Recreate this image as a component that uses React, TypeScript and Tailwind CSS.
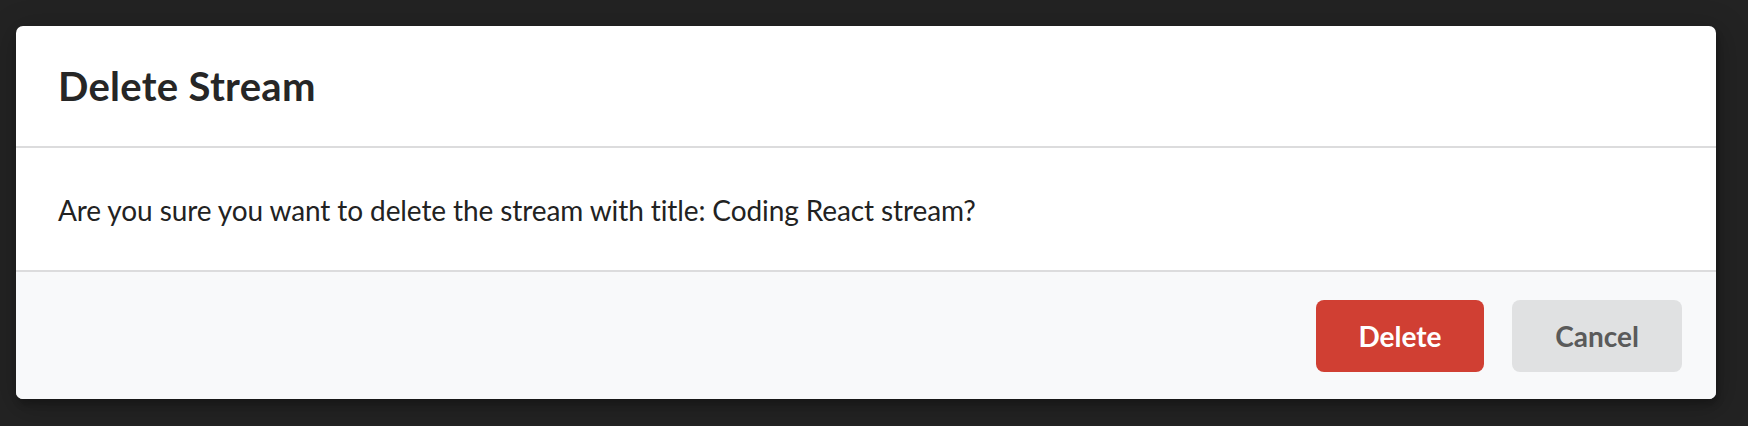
export default function App() {
  return (
    <div
      className="h-[426px] w-[1748px] overflow-hidden bg-[#232323] pl-[16px] pt-[26px]"
      style={{ fontFamily: 'Lato, "Open Sans", sans-serif' }}
    >
      <div className="w-[1700px] overflow-hidden rounded-[7px] bg-white shadow-[2px_6px_6px_0_rgba(0,0,0,0.2),2px_6px_30px_4px_rgba(0,0,0,0.2)]">
        <div className="border-b-2 border-[#dcdcdd] px-[42px] pb-[34px] pt-[35px]">
          <h1 className="text-[40px] font-bold leading-[51px] tracking-[0.3px] text-[#262626]">Delete Stream</h1>
        </div>
        <div className="border-b-2 border-[#dcdcdd] px-[42px] pb-[40px] pt-[42px]">
          <p className="text-[28px] leading-[40px] tracking-[-0.1px] text-[#222222]">
            Are you sure you want to delete the stream with title: Coding React stream?
          </p>
        </div>
        <div className="flex justify-end gap-[28px] bg-[#f8f9fa] pb-[27px] pl-[28px] pr-[34px] pt-[28px]">
          <button className="h-[72px] w-[168px] rounded-[8px] bg-[#d03f33] text-[28px] font-bold text-white">
            Delete
          </button>
          <button className="h-[72px] w-[170px] rounded-[8px] bg-[#e0e1e2] text-[28px] font-bold text-[#5a5a5a]">
            Cancel
          </button>
        </div>
      </div>
    </div>
  );
}
